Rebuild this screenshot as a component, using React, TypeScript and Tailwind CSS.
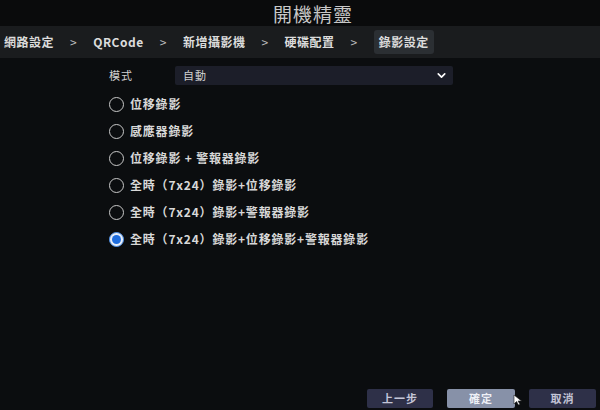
import { ChevronDown } from "lucide-react";

const crumbs = ["網路設定", "QRCode", "新增攝影機", "硬碟配置"];

const options = [
  "位移錄影",
  "感應器錄影",
  "位移錄影 + 警報器錄影",
  "全時（7x24）錄影+位移錄影",
  "全時（7x24）錄影+警報器錄影",
  "全時（7x24）錄影+位移錄影+警報器錄影",
];

const Radio = ({ checked }: { checked: boolean }) => (
  <span
    className={`flex h-[15px] w-[15px] shrink-0 items-center justify-center rounded-full border ${
      checked ? "border-[#4a8ee8] bg-[#e8eef8]" : "border-[#c8c8c8]"
    }`}
  >
    {checked && <span className="h-[9px] w-[9px] rounded-full bg-[#1f6ee0]" />}
  </span>
);

const App = () => {
  return (
    <div
      className="flex h-[410px] w-[600px] flex-col overflow-hidden bg-[#0b0d0f] text-[#d2d2d2]"
      style={{ fontFamily: '"Noto Sans CJK TC", "Noto Sans", sans-serif' }}
    >
      {/* Title */}
      <div className="flex h-[26px] items-center justify-center bg-[#0a0b0c] pl-[26px] text-[19px] leading-none tracking-[1px] text-[#c8c8c8]">
        開機精靈
      </div>

      {/* Breadcrumb */}
      <div className="flex h-[32px] items-center bg-[#1a1c1e] pl-[4px] text-[12px] font-bold tracking-[0.5px] text-[#dcdcdc]">
        {crumbs.map((c) => (
          <div key={c} className="flex items-center">
            <span>{c}</span>
            <span className="mx-[16px] font-normal text-[#bdbdbd]">&gt;</span>
          </div>
        ))}
        <span className="rounded-[3px] bg-[#2b2f33] px-[5px] py-[3px]">錄影設定</span>
      </div>

      {/* Content */}
      <div className="flex flex-1 flex-col pl-[109px] pt-[8px]">
        <div className="flex items-center text-[11px]">
          <span className="w-[66px] tracking-[1px]">模式</span>
          <div className="flex h-[19px] w-[278px] items-center justify-between rounded-[2px] bg-[#1c1e29] pl-[8px] pr-[5px]">
            <span className="tracking-[1px]">自動</span>
            <ChevronDown className="h-[13px] w-[13px] text-white" strokeWidth={3} />
          </div>
        </div>

        <div className="mt-[11px] flex flex-col gap-[11px] text-[12px] font-bold tracking-[0.8px] text-[#d8d8d8]">
          {options.map((o, i) => (
            <label key={o} className="flex h-[16px] items-center gap-[6px]">
              <Radio checked={i === options.length - 1} />
              <span>{o}</span>
            </label>
          ))}
        </div>

        <div className="mt-auto flex justify-end gap-[14px] pb-[2px] pr-[4px] text-[11px] font-bold tracking-[1px]">
          <button className="h-[19px] w-[66px] rounded-[2px] bg-[#2e3048] text-[#c4c6d8]">上一步</button>
          <div className="relative">
            <button className="h-[19px] w-[68px] rounded-[2px] bg-[#8791a8] text-[#eef0f6]">確定</button>
            <svg className="absolute left-[66px] top-[5px] h-[12px] w-[10px]" viewBox="0 0 10 12">
              <path d="M1 1 L1 10 L3.5 7.5 L5.5 11 L7 10.2 L5 7 L8.5 7 Z" fill="#fff" stroke="#222" strokeWidth="0.6" />
            </svg>
          </div>
          <button className="h-[19px] w-[67px] rounded-[2px] bg-[#2e3048] text-[#c4c6d8]">取消</button>
        </div>
      </div>
    </div>
  );
};

export default App;
